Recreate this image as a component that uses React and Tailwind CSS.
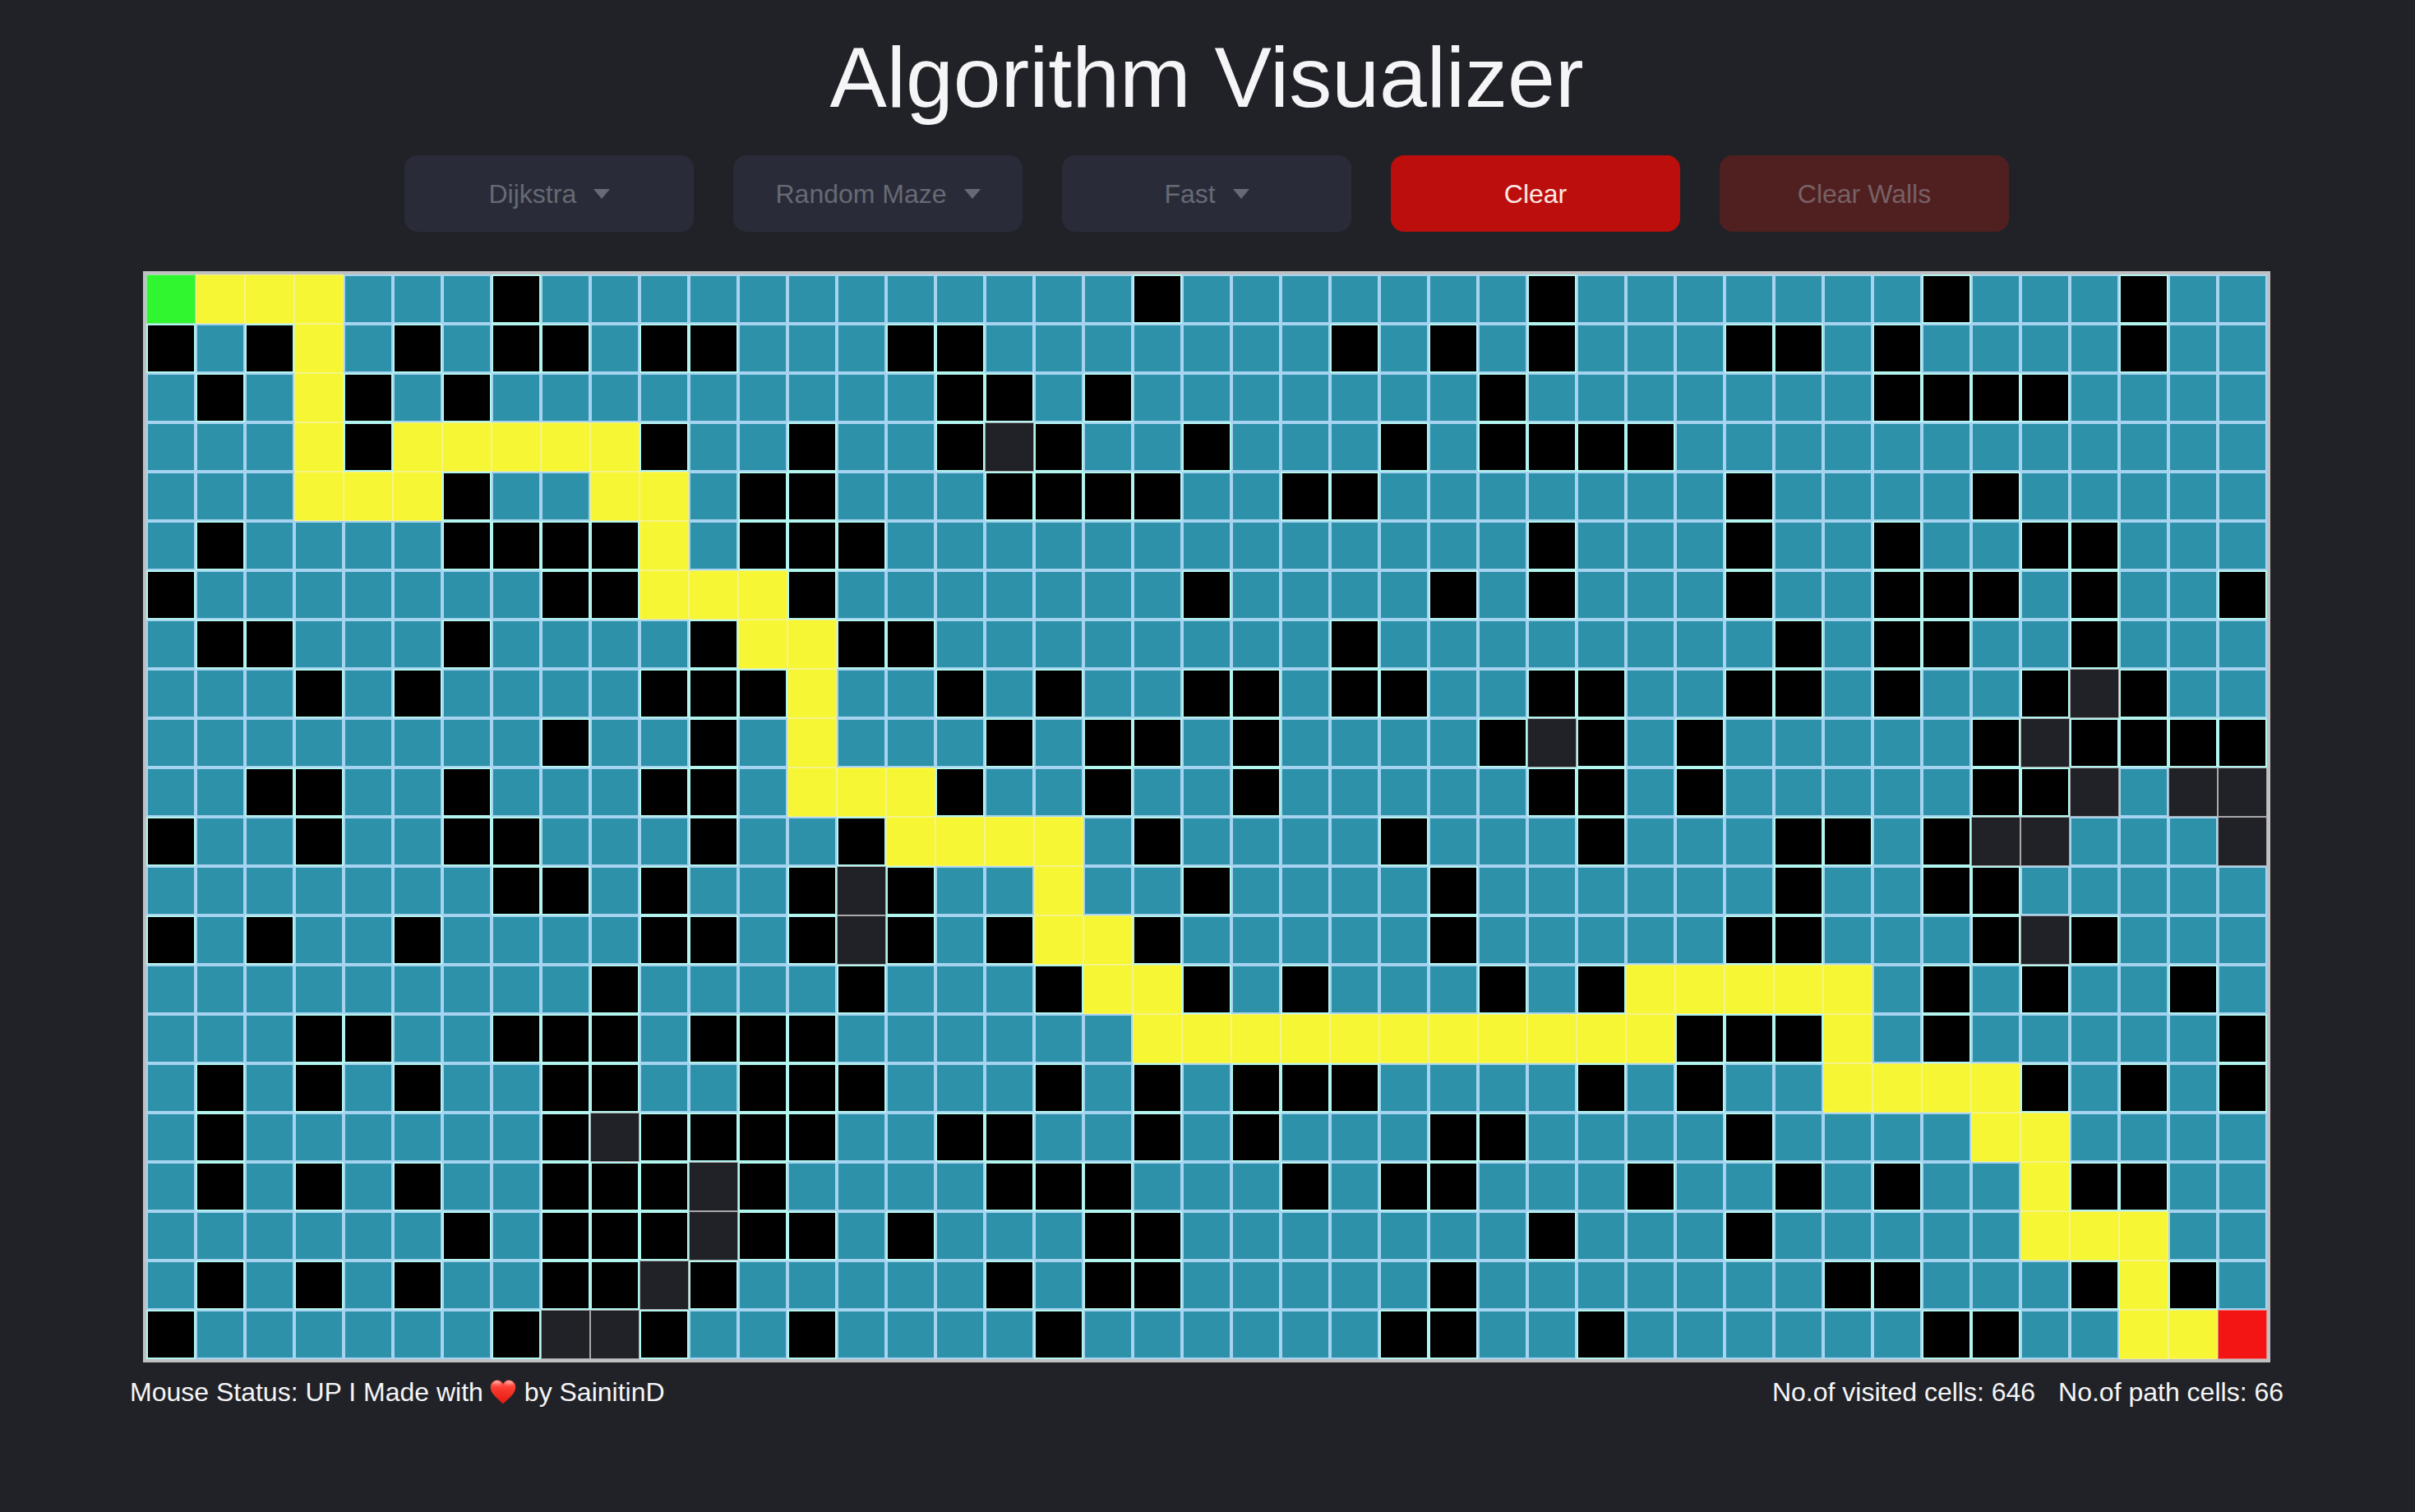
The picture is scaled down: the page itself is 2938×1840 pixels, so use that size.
import React from "react";

const WIDTH = 43;
const HEIGHT = 22;

// Wall columns, per row
const WALLS = [
  [7, 20, 28, 36, 40],
  [0, 2, 5, 7, 8, 10, 11, 15, 16, 24, 26, 28, 32, 33, 35, 40],
  [1, 4, 6, 16, 17, 19, 27, 35, 36, 37, 38],
  [4, 10, 13, 16, 18, 21, 25, 27, 28, 29, 30],
  [6, 12, 13, 17, 18, 19, 20, 23, 24, 32, 37],
  [1, 6, 7, 8, 9, 12, 13, 14, 28, 32, 35, 38, 39],
  [0, 8, 9, 13, 21, 26, 28, 32, 35, 36, 37, 39, 42],
  [1, 2, 6, 11, 14, 15, 24, 33, 35, 36, 39],
  [3, 5, 10, 11, 12, 16, 18, 21, 22, 24, 25, 28, 29, 32, 33, 35, 38, 40],
  [8, 11, 17, 19, 20, 22, 27, 29, 31, 37, 39, 40, 41, 42],
  [2, 3, 6, 10, 11, 16, 19, 22, 28, 29, 31, 37, 38],
  [0, 3, 6, 7, 11, 14, 20, 25, 29, 33, 34, 36],
  [7, 8, 10, 13, 15, 21, 26, 33, 36, 37],
  [0, 2, 5, 10, 11, 13, 15, 17, 20, 26, 32, 33, 37, 39],
  [9, 14, 18, 21, 23, 27, 29, 36, 38, 41],
  [3, 4, 7, 8, 9, 11, 12, 13, 31, 32, 33, 36, 42],
  [1, 3, 5, 8, 9, 12, 13, 14, 18, 20, 22, 23, 24, 29, 31, 38, 40, 42],
  [1, 8, 10, 11, 12, 13, 16, 17, 20, 22, 26, 27, 32],
  [1, 3, 5, 8, 9, 10, 12, 17, 18, 19, 23, 25, 26, 30, 33, 35, 39, 40],
  [6, 8, 9, 10, 12, 13, 15, 19, 20, 28, 32],
  [1, 3, 5, 8, 9, 11, 17, 19, 20, 26, 34, 35, 39, 41],
  [0, 7, 10, 13, 18, 25, 26, 29, 36, 37],
];

// Inclusive column ranges of the shortest path, per row
const PATH = [
  [[1, 3]],
  [[3, 3]],
  [[3, 3]],
  [[3, 3], [5, 9]],
  [[3, 5], [9, 10]],
  [[10, 10]],
  [[10, 12]],
  [[12, 13]],
  [[13, 13]],
  [[13, 13]],
  [[13, 15]],
  [[15, 18]],
  [[18, 18]],
  [[18, 19]],
  [[19, 20], [30, 34]],
  [[20, 30], [34, 34]],
  [[34, 37]],
  [[37, 38]],
  [[38, 38]],
  [[38, 40]],
  [[40, 40]],
  [[40, 41]],
];

// Open cells the search never reached
const UNREACHED = {
  3: [17],
  8: [39],
  9: [28, 38],
  10: [39, 41, 42],
  11: [37, 38, 42],
  12: [14],
  13: [14, 38],
  17: [9],
  18: [11],
  19: [11],
  20: [10],
  21: [8, 9],
};

const CELL_STYLES = {
  start: "border border-[#8fe8a0] bg-[#30f630]",
  end: "border border-[#e58080] bg-[#f31414]",
  wall: "border-2 border-[#b2f5ef] bg-black",
  path: "border border-[#f5f48a] bg-[#f6f634]",
  unreached: "border border-[#a9a9ab] bg-[#212227]",
  visited: "border-2 border-[#a6d3f0] bg-[#2d91a9]",
};

function cellKind(row, col) {
  if (row === 0 && col === 0) return "start";
  if (row === HEIGHT - 1 && col === WIDTH - 1) return "end";
  if (WALLS[row].includes(col)) return "wall";
  if (PATH[row].some(([from, to]) => col >= from && col <= to)) return "path";
  if ((UNREACHED[row] || []).includes(col)) return "unreached";
  return "visited";
}

function Dropdown({ label, value }) {
  return (
    <label className="flex h-[93px] w-[352px] items-center justify-center gap-5 rounded-2xl bg-[#292c38] text-[#666a74]">
      <select
        aria-label={label}
        disabled
        defaultValue={value}
        className="appearance-none bg-transparent text-[32px] leading-10 opacity-100"
      >
        <option>{value}</option>
      </select>
      <svg viewBox="0 0 20 12" className="h-3 w-5 fill-current" aria-hidden="true">
        <path d="M0 0h20L10 12z" />
      </svg>
    </label>
  );
}

function Heart() {
  return (
    <svg viewBox="0 0 32 30" className="ml-2 mr-[10px] h-[30px] w-8" role="img" aria-label="love">
      <defs>
        <linearGradient id="heart-fill" x1="0" y1="0" x2="0" y2="1">
          <stop offset="0" stopColor="#ff6a60" />
          <stop offset="0.35" stopColor="#fb3a30" />
          <stop offset="1" stopColor="#e0180f" />
        </linearGradient>
        <linearGradient id="heart-shine" x1="0" y1="0" x2="0" y2="1">
          <stop offset="0" stopColor="#ffd0c8" stopOpacity="0.9" />
          <stop offset="1" stopColor="#ff6a60" stopOpacity="0" />
        </linearGradient>
      </defs>
      <path
        fill="url(#heart-fill)"
        d="M16 5.200C14.600 2.300 11.900.6 8.900.6 4.300.6.8 4.300.8 9c0 8.800 9.200 14 15.200 20.600C22 23 31.200 17.800 31.200 9c0-4.700-3.500-8.400-8.100-8.400-3 0-5.700 1.700-7.100 4.600z"
      />
      <ellipse cx="8.500" cy="5.200" rx="5" ry="3.600" fill="url(#heart-shine)" />
      <ellipse cx="23.500" cy="5.200" rx="5" ry="3.600" fill="url(#heart-shine)" />
    </svg>
  );
}

export default function App() {
  return (
    <div className="min-h-screen bg-[#212227] pr-0.5 font-['Liberation_Sans',Arial,sans-serif] text-[#f5f5f7]">
      <header className="flex flex-col items-center pt-9">
        <h1 className="text-[104px] leading-[116px]">Algorithm Visualizer</h1>
        <div className="mt-[37px] flex justify-center gap-12">
          <Dropdown label="Algorithm" value="Dijkstra" />
          <Dropdown label="Maze" value="Random Maze" />
          <Dropdown label="Speed" value="Fast" />
          <button type="button" className="h-[93px] w-[352px] rounded-2xl bg-[#bd0e0e] text-[32px] text-[#fbe9e4]">
            Clear
          </button>
          <button
            type="button"
            disabled
            className="h-[93px] w-[352px] rounded-2xl bg-[#502021] text-[32px] text-[#776164]"
          >
            Clear Walls
          </button>
        </div>
      </header>

      <main className="mt-12 px-[174px]">
        <div className="grid grid-cols-[repeat(43,minmax(0,1fr))] border-4 border-[#c0bfc1]">
          {WALLS.map((_, row) =>
            Array.from({ length: WIDTH }, (_, col) => {
              const kind = cellKind(row, col);
              return <div key={`${row}-${col}`} className={`aspect-square ${CELL_STYLES[kind]}`} />;
            }),
          )}
        </div>
      </main>

      <footer className="mt-4 flex justify-between px-[158px] text-[32px] leading-10">
        <p className="flex items-center">
          Mouse Status: UP I Made with <Heart /> by SainitinD
        </p>
        <div className="flex gap-7">
          <p>No.of visited cells: 646</p>
          <p>No.of path cells: 66</p>
        </div>
      </footer>
    </div>
  );
}
